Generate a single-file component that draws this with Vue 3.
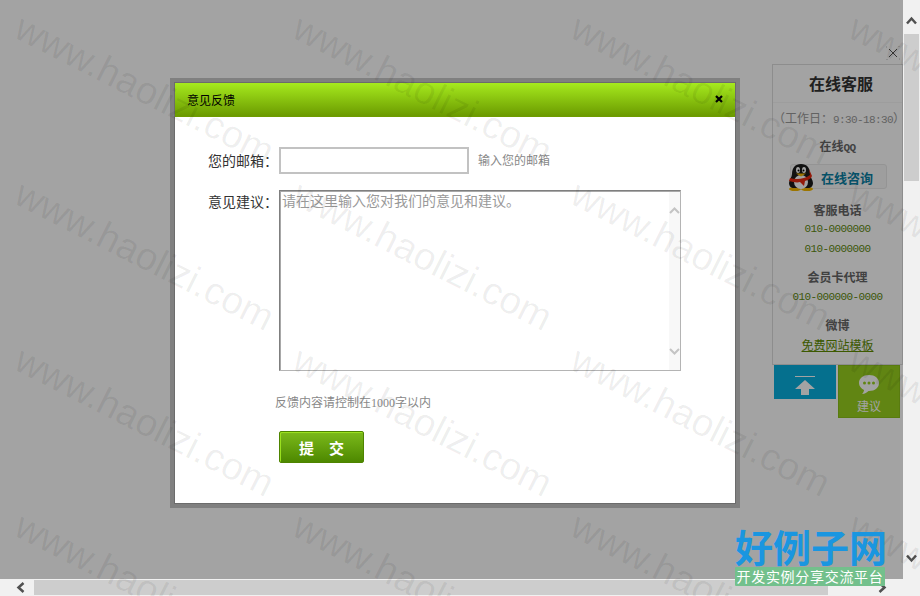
<template>
  <div class="app">
    <main class="viewport">
      <aside class="service">
        <button class="service-close" aria-label="关闭">
          <svg width="14" height="14" viewBox="0 0 14 14" fill="none">
            <path d="M3 3l8 8M11 3l-8 8" stroke="#555" stroke-width="1" />
            <path d="M0 2V0h2M12 0h2v2M14 12v2h-2M2 14H0v-2" stroke="#bbb" stroke-width="1" stroke-dasharray="1 1" />
          </svg>
        </button>
        <div class="panel">
          <h2 class="panel-title">在线客服</h2>
          <p class="hours">（工作日：<span class="mono">9:30-18:30</span>）</p>
          <h3 class="qq-title">在线<span class="mono">QQ</span></h3>
          <a class="qq-btn">
            <svg class="penguin" width="26" height="28" viewBox="0 0 26 28">
              <ellipse cx="7" cy="26" rx="6" ry="2.2" fill="#f5b800" />
              <ellipse cx="19" cy="26" rx="6" ry="2.2" fill="#f5b800" />
              <path d="M13 1c-6 0-9 4-9 10 0 3-3 6-3 9s2 5 5 5h14c3 0 5-2 5-5s-3-6-3-9c0-6-3-10-9-10z" fill="#1c1c1c" />
              <ellipse cx="13" cy="19" rx="7" ry="7" fill="#fff" />
              <ellipse cx="10" cy="7" rx="2" ry="3" fill="#fff" />
              <ellipse cx="16" cy="7" rx="2" ry="3" fill="#fff" />
              <circle cx="10.500" cy="7.500" r="1" fill="#000" />
              <circle cx="15.500" cy="7.500" r="1" fill="#000" />
              <path d="M8 10.500h10l-5 3z" fill="#f5b800" />
              <path d="M2 15c6 2 15 1 20-3l-1-6 3 7c-1 3-4 4-7 5l-1 5-4-4c-3 1-7 0-11-1z" fill="#e62a10" />
            </svg>
            <span>在线咨询</span>
          </a>
          <h3 class="phone-title">客服电话</h3>
          <p class="tel mono first">010-0000000</p>
          <p class="tel mono second">010-0000000</p>
          <h3 class="agent-title">会员卡代理</h3>
          <p class="tel mono agent">010-000000-0000</p>
          <h3 class="weibo-title">微博</h3>
          <a class="free-link">免费网站模板</a>
        </div>
        <div class="actions">
          <button class="to-top" aria-label="回到顶部">
            <svg width="22" height="20" viewBox="0 0 22 20">
              <rect x="1" y="0" width="20" height="1" fill="#fff" />
              <path d="M11 4L21 13H15V19H7V13H1z" fill="#fff" />
            </svg>
          </button>
          <button class="suggest">
            <svg width="22" height="20" viewBox="0 0 22 20">
              <path d="M11 0C5 0 1 3.500 1 8c0 3 2 5.500 5 7 0 1.500-1 3-2 4 3 0 5-1.500 6.500-3H11c6 0 10-3.500 10-8S17 0 11 0z" fill="#fff" />
              <circle cx="6.500" cy="8" r="1.500" fill="#98d11f" />
              <circle cx="11" cy="8" r="1.500" fill="#98d11f" />
              <circle cx="15.500" cy="8" r="1.500" fill="#98d11f" />
            </svg>
            <span>建议</span>
          </button>
        </div>
      </aside>

      <div class="mask">
        <section class="dialog">
          <header class="dialog-head">
            <span>意见反馈</span>
            <svg class="dialog-close" width="8" height="8" viewBox="0 0 8 8">
              <path d="M1 1l6 6M7 1L1 7" stroke="#000" stroke-width="2.200" />
            </svg>
          </header>
          <form class="dialog-body" @submit.prevent>
            <div class="row mail-row">
              <label>您的邮箱：</label>
              <input class="mail" type="text" />
              <span class="hint">输入您的邮箱</span>
            </div>
            <div class="row text-row">
              <label>意见建议：</label>
              <div class="area-wrap">
                <textarea class="area" placeholder="请在这里输入您对我们的意见和建议。"></textarea>
                <div class="area-bar">
                  <svg width="11" height="7" viewBox="0 0 11 7" fill="none"><path d="M1 6l4.500-4.500L10 6" stroke="#c4c4c4" stroke-width="2" /></svg>
                  <svg width="11" height="7" viewBox="0 0 11 7" fill="none"><path d="M1 1l4.500 4.500L10 1" stroke="#c4c4c4" stroke-width="2" /></svg>
                </div>
              </div>
            </div>
            <p class="tip">反馈内容请控制在<span class="tip-num">1000</span>字以内</p>
            <button class="submit" type="submit">提　交</button>
          </form>
        </section>
      </div>
    </main>

    <div class="vbar">
      <svg class="arrow-up" width="11" height="9" viewBox="0 0 11 9" fill="none"><path d="M1 7.500l4.500-5 4.500 5" stroke="#505050" stroke-width="2.500" /></svg>
      <div class="vthumb"></div>
      <svg class="arrow-down" width="11" height="9" viewBox="0 0 11 9" fill="none"><path d="M1 1.500l4.500 5 4.500-5" stroke="#505050" stroke-width="2.500" /></svg>
    </div>
    <div class="hbar">
      <svg class="arrow-left" width="9" height="11" viewBox="0 0 9 11" fill="none"><path d="M7.500 1l-5 4.500 5 4.500" stroke="#505050" stroke-width="2.500" /></svg>
      <div class="hthumb"></div>
      <svg class="arrow-right" width="9" height="11" viewBox="0 0 9 11" fill="none"><path d="M1.500 1l5 4.500-5 4.500" stroke="#505050" stroke-width="2.500" /></svg>
    </div>
    <div class="corner"></div>

    <div class="watermarks">
      <span v-for="n in 20" :key="n" class="mark">www.haolizi.com</span>
    </div>

    <div class="site-logo">
      <div class="logo-name">好例子网</div>
      <div class="logo-sub">开发实例分享交流平台</div>
    </div>
  </div>
</template>

<script setup>
</script>

<style scoped>
.app {
  position: relative;
  width: 920px;
  height: 596px;
  overflow: hidden;
  display: grid;
  grid-template-columns: 903px 17px;
  grid-template-rows: 579px 17px;
  background: #fff;
  font-family: "Noto Sans CJK SC", "Liberation Sans", sans-serif;
  font-size: 12px;
}

.mono {
  font-family: "Liberation Mono", monospace;
  font-size: 11px;
  letter-spacing: -0.6px;
}

/* --- page behind the mask --- */
.viewport {
  position: relative;
  overflow: hidden;
  display: flex;
  justify-content: flex-end;
}

.service {
  width: 131px;
  padding-top: 46px;
}

.service-close {
  display: block;
  width: 14px;
  height: 14px;
  margin: 0 3px 4px auto;
  padding: 0;
  border: 0;
  background: none;
}

.service-close svg {
  display: block;
}

.panel {
  box-sizing: border-box;
  height: 301px;
  border: 1px solid #ddd;
  text-align: center;
  color: #555;
}

.panel h2,
.panel h3,
.panel p {
  margin: 0;
}

.panel h3 {
  font-size: 12px;
  line-height: 16px;
  font-weight: 700;
  color: #666;
}

.panel-title {
  font-size: 16px;
  line-height: 24px;
  padding: 6px 0 7px 7px;
  color: #333;
  border-bottom: 1px solid #f6f6f6;
}

.hours {
  margin-top: 6px !important;
  line-height: 18px;
  color: #999;
  white-space: nowrap;
}

.qq-title {
  margin-top: 9px !important;
}

.qq-btn {
  position: relative;
  display: block;
  box-sizing: border-box;
  width: 97px;
  height: 25px;
  margin: 8px 0 0 17px;
  padding-left: 30px;
  border: 1px solid #e8e8e8;
  border-radius: 3px;
  background: #f8f8f8;
  text-align: left;
  font-size: 13px;
  line-height: 26px;
  font-weight: 700;
  color: #0a7fa3;
}

.penguin {
  position: absolute;
  left: -3px;
  top: -2px;
}

.phone-title {
  margin-top: 13px !important;
}

.tel {
  line-height: 14px;
  color: #5f8a10;
}

.tel.first {
  margin-top: 4px;
}

.tel.second {
  margin-top: 6px;
}

.agent-title {
  margin-top: 13px !important;
}

.tel.agent {
  margin-top: 5px;
}

.weibo-title {
  margin-top: 13px !important;
}

.free-link {
  display: block;
  margin-top: 4px;
  line-height: 16px;
  color: #5e8c00;
  text-decoration: underline;
}

.actions {
  display: flex;
  align-items: flex-start;
  gap: 2px;
  padding: 0 3px 0 2px;
}

.actions button {
  width: 62px;
  padding: 0;
  border: 0;
  font: inherit;
  color: #fff;
}

.to-top {
  height: 34px;
  padding-top: 10px !important;
  background: #09afdf;
  line-height: 0;
  box-sizing: border-box;
}

.suggest {
  box-sizing: border-box;
  height: 53px;
  padding-top: 9px !important;
  background: #98d11f;
  border: 1px solid #8cc11a !important;
  display: flex;
  flex-direction: column;
  align-items: center;
  gap: 2px;
  font-size: 12px !important;
  line-height: 16px;
}

/* --- mask + dialog --- */
.mask {
  position: absolute;
  inset: 0;
  background: rgba(0, 0, 0, 0.36);
}

.dialog {
  position: absolute;
  left: 174px;
  top: 82px;
  width: 560px;
  height: 420px;
  border: 1px solid #6c6c6c;
  box-shadow: 0 0 0 4px #808080;
  background: #fff;
}

.dialog-head {
  display: flex;
  align-items: center;
  justify-content: space-between;
  box-sizing: border-box;
  height: 34px;
  padding: 0 12px 1px;
  background: linear-gradient(#a6ea1e, #6b9a00);
  border-bottom: 1px solid #6f9c00;
  color: #000;
  font-size: 12px;
}

.dialog-body {
  display: block;
  margin: 0;
  padding: 30px 0 0 33px;
  color: #333;
}

.row {
  display: grid;
  grid-template-columns: 71px auto 1fr;
  font-size: 14px;
}

.mail-row {
  align-items: center;
}

.mail-row label,
.hint {
  padding-bottom: 2px;
}

.text-row {
  margin-top: 16px;
  line-height: 22px;
}

.mail {
  box-sizing: border-box;
  width: 190px;
  height: 27px;
  margin: 0;
  border: 2px solid #c2c2c2;
  background: #fff;
  outline: none;
}

.hint {
  margin-left: 9px;
  font-size: 12px;
  color: #888;
}

.area-wrap {
  position: relative;
  width: 402px;
  height: 181px;
}

.area {
  display: block;
  box-sizing: border-box;
  width: 100%;
  height: 100%;
  margin: 0;
  padding: 0 2px 0 2px;
  border-style: solid;
  border-width: 1px;
  border-color: #7f7f7f #b4b4b4 #b4b4b4 #7f7f7f;
  box-shadow: inset 1px 1px 0 #a8a8a8;
  outline: none;
  resize: none;
  font: 14px/18px "Noto Sans CJK SC", sans-serif;
}

.area::placeholder {
  color: #999;
  opacity: 1;
}

.area-bar {
  position: absolute;
  top: 2px;
  right: 1px;
  bottom: 1px;
  width: 11px;
  padding: 15px 0 15px;
  box-sizing: border-box;
  background: #f8f8f8;
  display: flex;
  flex-direction: column;
  justify-content: space-between;
}

.tip {
  margin: 22px 0 0 67px;
  font-size: 12px;
  line-height: 18px;
  color: #888;
}

.tip-num {
  font-family: "Liberation Serif", serif;
}

.submit {
  display: block;
  box-sizing: border-box;
  width: 85px;
  height: 32px;
  margin: 19px 0 0 71px;
  padding: 0;
  border: 1px solid #4e8400;
  border-radius: 2px;
  box-shadow: inset 1px 1px 0 #9be01f;
  background: linear-gradient(#7cba1b, #4d8800);
  color: #fff;
  font: 700 15px "Noto Sans CJK SC", sans-serif;
}

/* --- browser scrollbars --- */
.vbar,
.hbar,
.corner {
  background: #f1f1f1;
}

.vbar {
  display: flex;
  flex-direction: column;
  align-items: center;
  box-sizing: border-box;
  padding: 16px 1px;
}

.vthumb {
  width: 15px;
  height: 147px;
  margin-top: 9px;
  margin-bottom: auto;
  background: #cdcdcd;
}

.hbar {
  display: flex;
  align-items: center;
  box-sizing: border-box;
  padding: 1px 16px;
}

.hthumb {
  width: 794px;
  height: 15px;
  margin-left: 9px;
  margin-right: auto;
  background: #cdcdcd;
}

/* --- watermark and logo lie over everything --- */
.watermarks {
  position: absolute;
  inset: 0;
  overflow: hidden;
  pointer-events: none;
  display: grid;
  grid-template-columns: repeat(4, 278px);
  grid-auto-rows: 166px;
  padding: 7px 0 0 27px;
}

.mark {
  display: block;
  width: 278px;
  font-family: "Liberation Sans", sans-serif;
  font-size: 38.5px;
  line-height: 40px;
  white-space: nowrap;
  color: rgba(0, 0, 0, 0.065);
  transform: rotate(27deg);
  transform-origin: 0 0;
}

.site-logo {
  position: absolute;
  left: 735px;
  top: 526px;
  width: 150px;
}

.logo-name {
  font-size: 38px;
  line-height: 40px;
  font-weight: 700;
  color: #1a96e0;
  white-space: nowrap;
  text-align: center;
}

.logo-sub {
  height: 19px;
  margin-top: 1px;
  background: #73c08c;
  border-radius: 1px;
  color: #fff;
  font-size: 14px;
  line-height: 19px;
  letter-spacing: 0.7px;
  text-align: center;
  white-space: nowrap;
}
</style>
